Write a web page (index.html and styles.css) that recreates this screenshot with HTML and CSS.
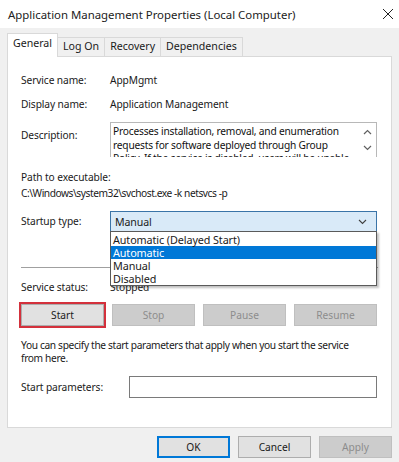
FILE: index.html
```html
<!DOCTYPE html>
<html lang="en">
<head>
    <meta charset="UTF-8">
    <title>Application Management Properties (Local Computer)</title>
    <link rel="stylesheet" href="styles.css">
</head>
<body>

<div class="titlebar">
    <span class="title">Application Management Properties (Local Computer)</span>
    <span class="close">
        <svg width="12" height="12" viewBox="0 0 12 12"><path d="M1 1 L11 11 M11 1 L1 11" stroke="#222" stroke-width="1"/></svg>
    </span>
</div>

<div class="dialog">
    <div class="tabs">
        <div class="tab active">General</div>
        <div class="tab">Log On</div>
        <div class="tab">Recovery</div>
        <div class="tab">Dependencies</div>
    </div>

    <div class="panel">
        <div class="row r-name">
            <div class="label">Service name:</div>
            <div class="value">AppMgmt</div>
        </div>
        <div class="row r-display">
            <div class="label">Display name:</div>
            <div class="value">Application Management</div>
        </div>
        <div class="row r-desc">
            <div class="label desc-label">Description:</div>
            <div class="desc-box">
                <div class="desc-text">Processes installation, removal, and enumeration<br>requests for software deployed through Group<br>Policy. If the service is disabled, users will be unable</div>
                <div class="desc-scroll">
                    <svg width="9" height="6" viewBox="0 0 9 6"><path d="M1 5 L4.5 1.5 L8 5" fill="none" stroke="#606060" stroke-width="1.2"/></svg>
                    <svg width="9" height="6" viewBox="0 0 9 6"><path d="M1 1 L4.5 4.5 L8 1" fill="none" stroke="#606060" stroke-width="1.2"/></svg>
                </div>
            </div>
        </div>

        <div class="path-label">Path to executable:</div>
        <div class="path-value">C:\Windows\system32\svchost.exe -k netsvcs -p</div>

        <div class="row r-startup">
            <div class="label">Startup type:</div>
            <div class="combo-wrap">
                <div class="combo">
                    <span>Manual</span>
                    <svg width="9" height="6" viewBox="0 0 9 6"><path d="M1 1 L4.5 4.5 L8 1" fill="none" stroke="#404040" stroke-width="1.1"/></svg>
                </div>
                <div class="dropdown">
                    <div class="opt">Automatic (Delayed Start)</div>
                    <div class="opt selected">Automatic</div>
                    <div class="opt">Manual</div>
                    <div class="opt">Disabled</div>
                </div>
            </div>
        </div>

        <div class="separator"></div>

        <div class="row r-status">
            <div class="label">Service status:</div>
            <div class="value">Stopped</div>
        </div>

        <div class="svc-buttons">
            <button class="btn marked">Start</button>
            <button class="btn" disabled>Stop</button>
            <button class="btn" disabled>Pause</button>
            <button class="btn" disabled>Resume</button>
        </div>

        <p class="hint">You can specify the start parameters that apply when you start the service<br>from here.</p>

        <div class="row r-params">
            <div class="label params-label">Start parameters:</div>
            <div class="params-input"></div>
        </div>
    </div>

    <div class="footer">
        <button class="btn dlg default">OK</button>
        <button class="btn dlg">Cancel</button>
        <button class="btn dlg" disabled>Apply</button>
    </div>
</div>

</body>
</html>
```

FILE: styles.css
```css
* {
    margin: 0;
    padding: 0;
    box-sizing: border-box;
}

body {
    width: 399px;
    height: 462px;
    overflow: hidden;
    font-family: 'Noto Sans', 'Liberation Sans', sans-serif;
    font-size: 10.2px;
    letter-spacing: -0.1px;
    color: #1a1a1a;
    background: #f0f0f0;
}

.titlebar {
    height: 28px;
    background: #ffffff;
    display: flex;
    align-items: center;
    justify-content: space-between;
    padding: 0 5px 0 8px;
}

.title {
    font-size: 11.4px;
    letter-spacing: 0;
    color: #222;
}

.close {
    display: flex;
}

.dialog {
    padding: 5px 7px 0 7px;
}

/* tabs */
.tabs {
    display: flex;
    align-items: flex-end;
    height: 23px;
    letter-spacing: 0;
}

.tab {
    height: 19px;
    line-height: 17px;
    padding: 0 5px;
    border: 1px solid #d9d9d9;
    border-bottom: none;
    margin-left: -1px;
    background: #f0f0f0;
    font-size: 10.6px;
}

.tab.active {
    height: 24px;
    margin-bottom: -1px;
    margin-left: 0;
    background: #ffffff;
    line-height: 19px;
    padding: 0 5px;
    position: relative;
    z-index: 1;
}

.panel {
    background: #ffffff;
    border: 1px solid #d9d9d9;
    height: 372px;
    padding: 16px 13px 0 13px;
}

.row {
    display: flex;
    align-items: flex-start;
}

.label {
    width: 89px;
    flex-shrink: 0;
    line-height: 14px;
}

.value {
    line-height: 14px;
}

.r-display {
    margin-top: 10px;
}

.r-desc {
    margin-top: 11px;
}

.desc-label {
    margin-top: 6px;
}

.desc-box {
    width: 267px;
    height: 35px;
    border: 1px solid #b8b8b8;
    border-bottom: none;
    display: flex;
    overflow: hidden;
}

.desc-text {
    flex: 1;
    padding: 2px 0 0 2px;
    line-height: 13.5px;
    letter-spacing: -0.2px;
    white-space: nowrap;
    overflow: hidden;
    color: #111;
}

.desc-scroll {
    width: 17px;
    display: flex;
    flex-direction: column;
    align-items: center;
    gap: 10px;
    padding-top: 6px;
}

.path-label {
    margin-top: 13px;
    line-height: 14px;
}

.path-value {
    margin-top: 2px;
    line-height: 14px;
    letter-spacing: -0.45px;
}

.r-startup {
    margin-top: 11px;
}

.r-startup .label {
    margin-top: 3px;
}

.combo-wrap {
    position: relative;
}

.combo {
    width: 267px;
    height: 21px;
    background: #d9eaf8;
    border: 1px solid #3a74a8;
    display: flex;
    align-items: center;
    justify-content: space-between;
    padding: 0 9px 0 4px;
    font-size: 10.6px;
}

.dropdown {
    position: absolute;
    top: 20px;
    left: 0;
    width: 267px;
    background: #ffffff;
    border: 1px solid #5a5a5a;
    box-shadow: 2px 2px 2px rgba(0, 0, 0, 0.25);
    z-index: 5;
}

.opt {
    height: 13px;
    line-height: 13px;
    padding-left: 2px;
    font-size: 10.8px;
}

.opt:first-child {
    margin-top: 1px;
}

.opt.selected {
    background: #0078d7;
    color: #ffffff;
}

.separator {
    height: 1px;
    background: #a0a0a0;
    margin-top: 35px;
}

.r-status {
    margin-top: 12px;
}

.svc-buttons {
    display: flex;
    gap: 8px;
    margin-top: 10px;
}

.btn {
    font-family: inherit;
    font-size: 10.2px;
    height: 22px;
    width: 83px;
    background: #e1e1e1;
    border: 1px solid #adadad;
    color: #1a1a1a;
}

.btn:disabled {
    background: #cccccc;
    border-color: #bfbfbf;
    color: #8c8c8c;
}

.btn.marked {
    outline: 2px solid #d3313c;
    outline-offset: 0;
}

.hint {
    margin-top: 13px;
    line-height: 13px;
    letter-spacing: -0.35px;
    white-space: nowrap;
}

.r-params {
    margin-top: 11px;
}

.params-label {
    width: 108px;
    margin-top: 4px;
}

.params-input {
    width: 248px;
    height: 22px;
    border: 1px solid #7a7a7a;
}

.footer {
    display: flex;
    justify-content: flex-end;
    gap: 8px;
    padding-top: 8px;
}

.btn.dlg {
    width: 73px;
    height: 22px;
}

.btn.default {
    border: 2px solid #0078d7;
}
```
